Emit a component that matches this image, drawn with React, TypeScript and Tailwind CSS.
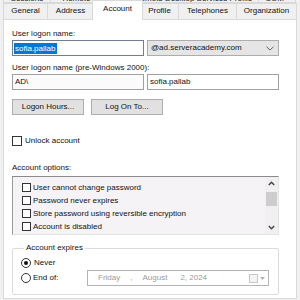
import React from "react";

const Tab = ({ label, w }: { label: string; w: string }) => (
  <div className={`${w} h-[16px] border border-b-0 border-[#d9d9d9] bg-[#f0f0f0] flex justify-center pt-[2px] -ml-px first:ml-0`}>
    {label}
  </div>
);

const TopTab = ({ label, w }: { label: string; w: string }) => (
  <div className={`${w} h-[16px] border border-[#d9d9d9] bg-[#f0f0f0] flex justify-center items-end -ml-px first:ml-0 overflow-hidden`}>
    <span className="whitespace-nowrap translate-y-[2px]">{label}</span>
  </div>
);

const Check = ({ label }: { label: string }) => (
  <div className="flex items-center h-[13px] gap-[2px]">
    <div className="w-[9px] h-[9px] border border-[#333] bg-white shrink-0" />
    <span className="whitespace-nowrap">{label}</span>
  </div>
);

export default function App() {
  return (
    <div className="w-[300px] h-[300px] overflow-hidden bg-[#f0f0f0] text-[8px] leading-[10px] text-[#111] font-['Liberation_Sans',Arial,sans-serif]">
      {/* tab row 1 (mostly clipped) */}
      <div className="flex pl-[3px] -mt-[13px] text-[#222]">
        <TopTab label="Sessions" w="w-[48px]" />
        <TopTab label="Remote control" w="w-[79px]" />
        <TopTab label="Remote Desktop Services Profile" w="w-[131px]" />
        <TopTab label="COM+" w="w-[38px]" />
      </div>
      {/* tab row 2 */}
      <div className="flex pl-[3px] h-[16px]">
        <Tab label="General" w="w-[45px]" />
        <Tab label="Address" w="w-[47px]" />
        <div className="relative z-10 w-[51px] h-[20px] -mt-[3px] -mx-[2px] border border-b-0 border-[#d9d9d9] bg-white flex justify-center pt-[3px]">
          Account
        </div>
        <Tab label="Profile" w="w-[39px]" />
        <Tab label="Telephones" w="w-[59px]" />
        <Tab label="Organization" w="w-[61px]" />
      </div>

      {/* panel */}
      <div className="ml-[3px] w-[294px] h-[280px] border border-[#d9d9d9] bg-white pl-[8px] pt-[9px]">
        <div className="h-[10px]">User logon name:</div>
        <div className="flex gap-[3px] mt-[1px]">
          <div className="w-[132px] h-[16px] border border-[#6f7f92] bg-white flex items-center pl-px">
            <span className="bg-[#0078d7] text-white h-[11px] leading-[11px] pl-px pr-[2px]">sofia.pallab</span>
          </div>
          <div className="w-[132px] h-[16px] border border-[#adadad] bg-[#e5e5e5] flex items-center pl-[3px] pr-[3px]">
            <span className="flex-1">@ad.serveracademy.com</span>
            <svg width="8" height="5" viewBox="0 0 8 5" className="mr-[1px]">
              <path d="M0.5 0.8 L4 4 L7.5 0.8" fill="none" stroke="#555" strokeWidth="0.9" />
            </svg>
          </div>
        </div>

        <div className="h-[10px] mt-[7px]">User logon name (pre-Windows 2000):</div>
        <div className="flex gap-[3px] mt-[1px]">
          <div className="w-[132px] h-[16px] border border-[#a0a0a0] bg-[#fbfbfb] flex items-center pl-[2px]">AD\</div>
          <div className="w-[132px] h-[16px] border border-[#a0a0a0] bg-white flex items-center pl-[2px]">sofia.pallab</div>
        </div>

        <div className="flex gap-[7px] mt-[9px]">
          <div className="w-[72px] h-[16px] border border-[#adadad] bg-[#e1e1e1] flex items-center justify-center">Logon Hours...</div>
          <div className="w-[72px] h-[16px] border border-[#adadad] bg-[#e1e1e1] flex items-center justify-center">Log On To...</div>
        </div>

        <div className="flex items-center h-[12px] gap-[3px] mt-[20px]">
          <div className="w-[10px] h-[10px] border border-[#333] bg-white" />
          <span>Unlock account</span>
        </div>

        <div className="h-[10px] mt-[16px]">Account options:</div>
        <div className="mt-[3px] w-[267px] h-[59px] border border-t-[#8a8a8a] border-l-[#9a9a9a] border-r-[#e3e3e3] border-b-[#e3e3e3] bg-[#f5f3f6] flex">
          <div className="flex-1 pt-[4px] pl-[9px] overflow-hidden">
            <Check label="User cannot change password" />
            <Check label="Password never expires" />
            <Check label="Store password using reversible encryption" />
            <Check label="Account is disabled" />
          </div>
          <div className="w-[13px] bg-[#f0f0f0] flex flex-col items-center">
            <div className="h-[13px] flex items-center justify-center">
              <svg width="7" height="5" viewBox="0 0 7 5">
                <path d="M0.8 4 L3.5 1.2 L6.2 4" fill="none" stroke="#444" strokeWidth="1.4" />
              </svg>
            </div>
            <div className="w-[11px] h-[14px] mt-[2px] bg-[#cdcdcd]" />
            <div className="flex-1" />
            <div className="h-[13px] flex items-center justify-center">
              <svg width="7" height="5" viewBox="0 0 7 5">
                <path d="M0.8 1 L3.5 3.8 L6.2 1" fill="none" stroke="#444" strokeWidth="1.4" />
              </svg>
            </div>
          </div>
        </div>

        <fieldset className="mt-[8px] w-[267px] border border-[#dcdcdc] rounded-[2px] pl-[8px] pb-[8px]">
          <legend className="ml-[3px] px-[2px] h-[10px]">Account expires</legend>
          <div className="flex items-center h-[13px] gap-[3px] mt-[3px]">
            <div className="w-[10px] h-[10px] rounded-full border border-[#333] bg-white flex items-center justify-center">
              <div className="w-[4px] h-[4px] rounded-full bg-[#111]" />
            </div>
            <span>Never</span>
          </div>
          <div className="flex items-center h-[16px] mt-[1px]">
            <div className="w-[10px] h-[10px] rounded-full border border-[#333] bg-white" />
            <span className="ml-[2px] w-[54px]">End of:</span>
            <div className="w-[182px] h-[16px] border border-[#b4b4b4] bg-white flex items-center pl-[10px] pr-[3px] text-[#9a9a9a]">
              <span>Friday</span>
              <span className="ml-[10px]">,</span>
              <span className="ml-[10px]">August</span>
              <span className="ml-[13px]">2, 2024</span>
              <span className="ml-auto flex items-center gap-[2px]">
                <span className="w-[9px] h-[9px] border border-[#c8c8c8] bg-[#f4f4f4]" />
                <svg width="5" height="3" viewBox="0 0 5 3">
                  <path d="M0 0 L5 0 L2.5 3 Z" fill="#b0b0b0" />
                </svg>
              </span>
            </div>
          </div>
        </fieldset>
      </div>
    </div>
  );
}
